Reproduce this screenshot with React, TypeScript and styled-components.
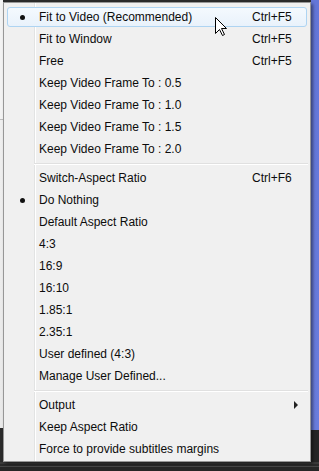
import React from "react";
import styled, { createGlobalStyle } from "styled-components";

const Global = createGlobalStyle`
  html, body { margin: 0; padding: 0; background: #2b2b2b; }
  body { font-family: "Liberation Sans", Arial, sans-serif; }
`;

const Desktop = styled.div`
  position: relative;
  width: 319px;
  height: 471px;
  overflow: hidden;
  display: grid;
  grid-template-columns: 3px 308px 8px;
  grid-template-rows: 462px 9px;
  background: #2b2b2b;
`;

const LeftStrip = styled.div`
  background: linear-gradient(
    to bottom,
    #f3f3f3 0,
    #f3f3f3 119px,
    #bdbdbd 119px,
    #bdbdbd 120px,
    #efefef 120px,
    #e9e9e9 428px,
    #2b2b2b 428px
  );
`;

const RightStrip = styled.div`
  background: linear-gradient(to bottom, #6376d8 0, #6a7ddd 430px, #252525 430px);
`;

const BottomStrip = styled.div`
  grid-column: 1 / -1;
  background: linear-gradient(to bottom, #3a3a3a 0, #3a3a3a 2px, #2a2a2a 2px, #2a2a2a 4px, #474747 4px, #474747 5px, #262626 5px);
`;

const Menu = styled.div`
  position: relative;
  z-index: 1;
  box-sizing: border-box;
  margin-top: 2px;
  height: 460px;
  border: 1px solid #979797;
  padding: 3px 0 1px;
  display: flex;
  flex-direction: column;
  box-shadow: 2px 2px 3px rgba(0, 0, 0, 0.45);
  background: linear-gradient(
      to right,
      transparent 30px,
      #e2e3e3 30px,
      #e2e3e3 31px,
      #ffffff 31px,
      #ffffff 32px,
      transparent 32px
    ),
    #f0f0f0;
`;

const Item = styled.div<{ $hot?: boolean }>`
  box-sizing: border-box;
  height: 20px;
  margin: 1px 3px;
  display: grid;
  grid-template-columns: 27px 1fr 55px;
  align-items: center;
  font-size: 12px;
  color: #0c0c0c;
  border-radius: 3px;
  border: 1px solid ${(p) => (p.$hot ? "#aed4f2" : "transparent")};
  background: ${(p) =>
    p.$hot ? "linear-gradient(to bottom, #f4f9fe 0%, #e9f2fb 100%)" : "transparent"};
`;

const Check = styled.span`
  display: flex;
  justify-content: center;
  padding-left: 2px;
`;

const Bullet = styled.span`
  width: 5px;
  height: 5px;
  border-radius: 50%;
  background: #111;
`;

const Label = styled.span`
  padding-left: 4px;
  white-space: nowrap;
`;

const Shortcut = styled.span`
  white-space: nowrap;
  margin-left: 1px;
`;

const Arrow = styled.span`
  justify-self: end;
  margin-right: 8px;
  width: 0;
  height: 0;
  border-top: 4px solid transparent;
  border-bottom: 4px solid transparent;
  border-left: 4px solid #222;
`;

const Separator = styled.div`
  height: 7px;
  margin-left: 30px;
  margin-right: 2px;
  background: linear-gradient(
    to bottom,
    transparent 3px,
    #e0e0e0 3px,
    #e0e0e0 4px,
    #ffffff 4px,
    #ffffff 5px,
    transparent 5px
  );
`;

const Cursor = styled.svg`
  position: absolute;
  left: 215px;
  top: 17px;
  z-index: 3;
`;

type Entry =
  | { sep: true }
  | { label: string; shortcut?: string; checked?: boolean; hot?: boolean; sub?: boolean; sep?: false };

const entries: Entry[] = [
  { label: "Fit to Video (Recommended)", shortcut: "Ctrl+F5", checked: true, hot: true },
  { label: "Fit to Window", shortcut: "Ctrl+F5" },
  { label: "Free", shortcut: "Ctrl+F5" },
  { label: "Keep Video Frame To : 0.5" },
  { label: "Keep Video Frame To : 1.0" },
  { label: "Keep Video Frame To : 1.5" },
  { label: "Keep Video Frame To : 2.0" },
  { sep: true },
  { label: "Switch-Aspect Ratio", shortcut: "Ctrl+F6" },
  { label: "Do Nothing", checked: true },
  { label: "Default Aspect Ratio" },
  { label: "4:3" },
  { label: "16:9" },
  { label: "16:10" },
  { label: "1.85:1" },
  { label: "2.35:1" },
  { label: "User defined (4:3)" },
  { label: "Manage User Defined..." },
  { sep: true },
  { label: "Output", sub: true },
  { label: "Keep Aspect Ratio" },
  { label: "Force to provide subtitles margins" },
];

export default function App() {
  return (
    <>
      <Global />
      <Desktop>
        <LeftStrip />
        <Menu>
          {entries.map((e, i) =>
            e.sep ? (
              <Separator key={i} />
            ) : (
              <Item key={i} $hot={e.hot}>
                <Check>{e.checked && <Bullet />}</Check>
                <Label>{e.label}</Label>
                {e.shortcut ? <Shortcut>{e.shortcut}</Shortcut> : e.sub ? <Arrow /> : <span />}
              </Item>
            )
          )}
        </Menu>
        <RightStrip />
        <BottomStrip />
        <Cursor width="13" height="20" viewBox="0 0 13 20">
          <path
            d="M0.5 0.5 V16.5 L4.5 12.5 L7.5 18.5 L9.5 17.5 L6.5 11.5 H11.5 Z"
            fill="#fff"
            stroke="#000"
            strokeWidth="1"
            strokeLinejoin="miter"
          />
        </Cursor>
      </Desktop>
    </>
  );
}
